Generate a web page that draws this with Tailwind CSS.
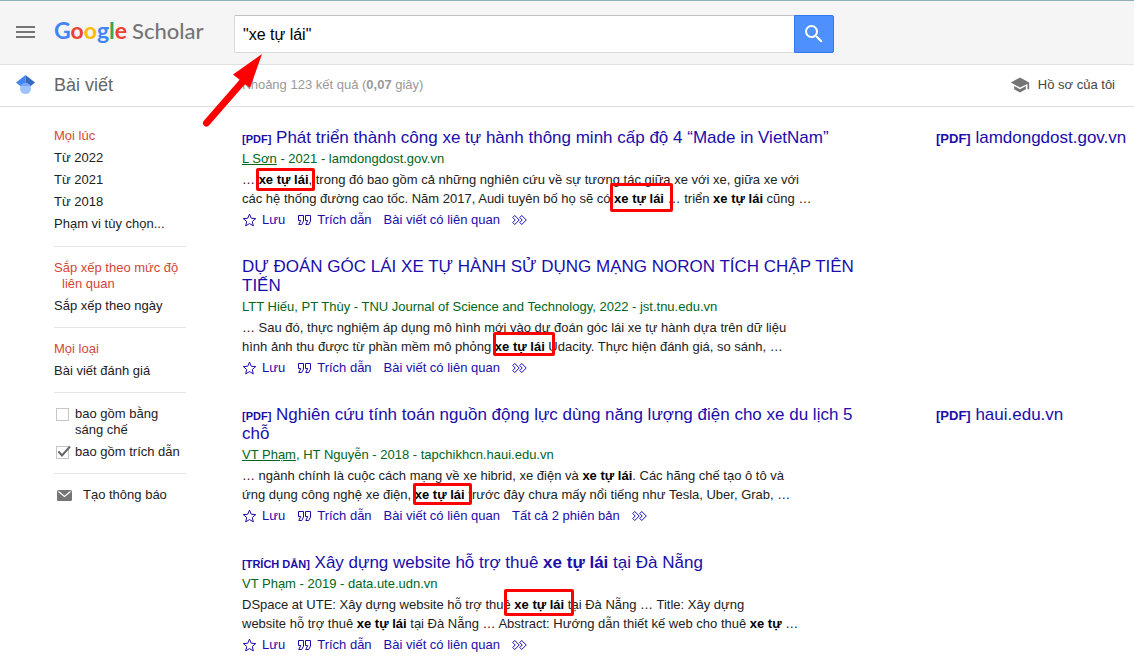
<!DOCTYPE html>
<html lang="vi">
  <head>
    <meta charset="UTF-8" />
    <meta name="viewport" content="width=device-width, initial-scale=1.0" />
    <title>"xe tự lái" - Google Scholar</title>
    <script src="https://cdn.jsdelivr.net/npm/@tailwindcss/browser@4"></script>
  </head>
  <body class="relative overflow-x-hidden bg-white font-['Liberation_Sans',Arial,sans-serif] text-[13px] leading-4 text-[#222]">
    <!-- icons shared by the result rows -->
    <svg class="hidden">
      <symbol id="star" viewBox="0 0 15 16"><path d="M7.5 11.57l3.824 2.308-1.015-4.35 3.379-2.926-4.45-.378L7.5 2.122 5.761 6.224l-4.449.378 3.379 2.926-1.015 4.35z" /></symbol>
      <symbol id="cite" viewBox="0 0 15 16"><path d="M6.5 3.5H1.5V8.5H3.75L1.75 12.5H4.75L6.5 9V3.5zM13.5 3.5H8.5V8.5H10.75L8.75 12.5H11.75L13.5 9V3.5z" /></symbol>
      <symbol id="more" viewBox="0 0 15 16"><path d="M.75 5.5l2-2L7.25 8l-4.5 4.5-2-2L3.25 8zM7.75 5.5l2-2L14.25 8l-4.5 4.5-2-2L10.25 8z" /></symbol>
    </svg>

    <header class="flex h-[65px] items-center border-t border-b border-t-[#8fb0b5] border-b-[#e0e0e0] bg-[#f5f5f5] pb-[2px]">
      <button class="flex w-[54px] pl-4" aria-label="Menu">
        <svg class="h-3 w-[19px] fill-[#757575]" viewBox="0 0 19 12"><path d="M0 0h19v2H0zM0 5h19v2H0zM0 10h19v2H0z" /></svg>
      </button>
      <a href="#" class="flex w-[180px] items-baseline gap-[5px] pb-[2px] font-[Lato,sans-serif] text-[22px] leading-7 font-medium text-[#757575]" aria-label="Google Scholar">
        <span class="text-[23px] font-bold"><span class="text-[#4285f4]">G</span><span class="text-[#ea4335]">o</span><span class="text-[#fbbc05]">o</span><span class="text-[#4285f4]">g</span><span class="text-[#34a853]">l</span><span class="text-[#ea4335]">e</span></span>
        <span>Scholar</span>
      </a>
      <form class="mt-1 flex h-[38px] w-[600px]">
        <input type="text" value='"xe tự lái"' aria-label="Tìm kiếm" class="min-w-0 flex-1 rounded-l-xs border border-r-0 border-[#d9d9d9] border-t-[#c0c0c0] bg-white px-2 pt-[2px] text-base text-black" />
        <button type="button" aria-label="Tìm kiếm" class="flex w-10 items-center justify-center rounded-r-xs border border-[#3079ed] bg-[#4d90fe]">
          <svg class="size-6 fill-white" viewBox="0 0 24 24"><path d="M15.500 14h-.79l-.28-.27A6.471 6.471 0 0 0 16 9.500 6.500 6.500 0 1 0 9.500 16c1.610 0 3.090-.59 4.230-1.570l.27.28v.79l5 4.990L20.490 19l-4.990-5zm-6 0C7.010 14 5 11.990 5 9.500S7.010 5 9.500 5 14 7.010 14 9.500 11.990 14 9.500 14z" /></svg>
        </button>
      </form>
    </header>

    <div class="flex h-[42px] items-center border-b border-[#e0e0e0] pb-[2px]">
      <div class="w-[54px] pl-4">
        <svg class="size-[19px]" viewBox="0 0 512 512">
          <path fill="#4285f4" d="M256 411.120L0 202.667 256 0z" />
          <path fill="#356ac3" d="M256 411.120l256-208.453L256 0z" />
          <circle fill="#a0c3ff" cx="256" cy="362.667" r="149.333" />
          <path fill="#76a7fa" d="M121.037 298.667c23.968-50.453 75.392-85.334 134.963-85.334s110.995 34.881 134.963 85.334H121.037z" />
        </svg>
      </div>
      <h1 class="w-[188px] text-lg leading-6 text-[#666]">Bài viết</h1>
      <p class="flex-1 text-[#999]">Khoảng 123 kết quả (<b>0,07</b> giây)</p>
      <a href="#" class="flex items-center gap-2 pr-[19px] text-[#444]">
        <svg class="size-5 fill-[#757575]" viewBox="0 0 24 24"><path d="M5 13.180v4L12 21l7-3.820v-4L12 17l-7-3.820zM12 3L1 9l11 6 9-4.090V17h2V9L12 3z" /></svg>
        Hồ sơ của tôi
      </a>
    </div>

    <div class="flex">
      <aside class="w-[242px] shrink-0 pt-[18px] pl-[54px]">
        <div class="w-[132px]">
          <ul class="border-b border-[#e5e5e5] pb-[11px]">
            <li class="py-[3px]"><a href="#" class="text-[#d14836]">Mọi lúc</a></li>
            <li class="py-[3px]"><a href="#">Từ 2022</a></li>
            <li class="py-[3px]"><a href="#">Từ 2021</a></li>
            <li class="py-[3px]"><a href="#">Từ 2018</a></li>
            <li class="py-[3px]"><a href="#">Phạm vi tùy chọn...</a></li>
          </ul>
          <ul class="border-b border-[#e5e5e5] py-[10px]">
            <li class="py-[3px] pl-2 -indent-2"><a href="#" class="text-[#d14836]">Sắp xếp theo mức độ liên quan</a></li>
            <li class="py-[3px]"><a href="#">Sắp xếp theo ngày</a></li>
          </ul>
          <ul class="border-b border-[#e5e5e5] py-[10px]">
            <li class="py-[3px]"><a href="#" class="text-[#d14836]">Mọi loại</a></li>
            <li class="py-[3px]"><a href="#">Bài viết đánh giá</a></li>
          </ul>
          <div class="border-b border-[#e5e5e5] py-[10px]">
            <label class="flex gap-[6px] py-[3px] pl-[2px]">
              <input type="checkbox" class="mt-[2px] size-[13px] shrink-0 appearance-none border border-[#c6c6c6] bg-white" />
              <span class="w-[100px]">bao gồm bằng sáng chế</span>
            </label>
            <label class="relative flex gap-[6px] py-[3px] pl-[2px] whitespace-nowrap">
              <input type="checkbox" checked class="mt-[2px] size-[13px] shrink-0 appearance-none border border-[#c6c6c6] bg-white" />
              <svg class="absolute top-1 left-[3px] h-3 w-[14px] fill-none stroke-[#666] stroke-2" viewBox="0 0 14 12"><path d="M1.500 6.500l3.500 4L13 1.500" /></svg>
              bao gồm trích dẫn
            </label>
          </div>
          <a href="#" class="mt-[10px] flex items-center gap-[11px] py-[3px] pl-[3px]">
            <svg class="h-[11px] w-[15px]" viewBox="0 0 15 11"><rect width="15" height="11" rx="1.500" fill="#757575" /><path d="M1.500 1.500l6 5 6-5" fill="none" stroke="#fff" stroke-width="1.200" /></svg>
            Tạo thông báo
          </a>
        </div>
      </aside>

      <main class="flex min-w-0 flex-1 flex-col gap-7 pt-[21px]">
        <article class="flex">
          <div class="w-[694px] shrink-0">
            <h3 class="mb-[3px] w-[624px] text-[17px] leading-[19px] text-[#1a0dab]"><b class="text-[11px] leading-none">[PDF]</b> <a href="#">Phát triển thành công xe tự hành thông minh cấp độ 4 “Made in VietNam”</a></h3>
            <p class="leading-[18px] text-[#006621]"><a href="#" class="underline">L Sơn</a> - 2021 - lamdongdost.gov.vn</p>
            <p class="mt-[2px] leading-[19px]">… <b class="text-black">xe tự lái</b>, trong đó bao gồm cả những nghiên cứu về sự tương tác giữa xe với xe, giữa xe với<br />các hệ thống đường cao tốc. Năm 2017, Audi tuyên bố họ sẽ có <b class="text-black">xe tự lái</b> … triển <b class="text-black">xe tự lái</b> cũng …</p>
            <div class="mt-[3px] flex gap-3 leading-[18px] text-[#1a0dab]">
              <a href="#" class="flex items-center gap-[5px]"><svg class="h-4 w-[15px] fill-none stroke-current"><use href="#star" /></svg>Lưu</a>
              <a href="#" class="flex items-center gap-[5px]"><svg class="h-4 w-[15px] fill-none stroke-current"><use href="#cite" /></svg>Trích dẫn</a>
              <a href="#">Bài viết có liên quan</a>
              <a href="#" class="flex items-center" aria-label="Thêm"><svg class="h-4 w-[15px] fill-none stroke-current"><use href="#more" /></svg></a>
            </div>
          </div>
          <a href="#" class="text-[17px] leading-[19px] whitespace-nowrap text-[#1a0dab]"><b class="text-[13px] leading-none">[PDF]</b> lamdongdost.gov.vn</a>
        </article>

        <article class="flex">
          <div class="w-[694px] shrink-0">
            <h3 class="mb-[3px] w-[624px] text-[17px] leading-[19px] text-[#1a0dab]"><a href="#">DỰ ĐOÁN GÓC LÁI XE TỰ HÀNH SỬ DỤNG MẠNG NORON TÍCH CHẬP TIÊN TIẾN</a></h3>
            <p class="leading-[18px] text-[#006621]">LTT Hiếu, PT Thùy - TNU Journal of Science and Technology, 2022 - jst.tnu.edu.vn</p>
            <p class="mt-[2px] leading-[19px]">… Sau đó, thực nghiệm áp dụng mô hình mới vào dự đoán góc lái xe tự hành dựa trên dữ liệu<br />hình ảnh thu được từ phần mềm mô phỏng <b class="text-black">xe tự lái</b> Udacity. Thực hiện đánh giá, so sánh, …</p>
            <div class="mt-[3px] flex gap-3 leading-[18px] text-[#1a0dab]">
              <a href="#" class="flex items-center gap-[5px]"><svg class="h-4 w-[15px] fill-none stroke-current"><use href="#star" /></svg>Lưu</a>
              <a href="#" class="flex items-center gap-[5px]"><svg class="h-4 w-[15px] fill-none stroke-current"><use href="#cite" /></svg>Trích dẫn</a>
              <a href="#">Bài viết có liên quan</a>
              <a href="#" class="flex items-center" aria-label="Thêm"><svg class="h-4 w-[15px] fill-none stroke-current"><use href="#more" /></svg></a>
            </div>
          </div>
        </article>

        <article class="flex">
          <div class="w-[694px] shrink-0">
            <h3 class="mb-[3px] w-[624px] text-[17px] leading-[19px] text-[#1a0dab]"><b class="text-[11px] leading-none">[PDF]</b> <a href="#">Nghiên cứu tính toán nguồn động lực dùng năng lượng điện cho xe du lịch 5 chỗ</a></h3>
            <p class="leading-[18px] text-[#006621]"><a href="#" class="underline">VT Phạm</a>, HT Nguyễn - 2018 - tapchikhcn.haui.edu.vn</p>
            <p class="mt-[2px] leading-[19px]">… ngành chính là cuộc cách mạng về xe hibrid, xe điện và <b class="text-black">xe tự lái</b>. Các hãng chế tạo ô tô và<br />ứng dụng công nghệ xe điện, <b class="text-black">xe tự lái</b> trước đây chưa mấy nổi tiếng như Tesla, Uber, Grab, …</p>
            <div class="mt-[3px] flex gap-3 leading-[18px] text-[#1a0dab]">
              <a href="#" class="flex items-center gap-[5px]"><svg class="h-4 w-[15px] fill-none stroke-current"><use href="#star" /></svg>Lưu</a>
              <a href="#" class="flex items-center gap-[5px]"><svg class="h-4 w-[15px] fill-none stroke-current"><use href="#cite" /></svg>Trích dẫn</a>
              <a href="#">Bài viết có liên quan</a>
              <a href="#">Tất cả 2 phiên bản</a>
              <a href="#" class="flex items-center" aria-label="Thêm"><svg class="h-4 w-[15px] fill-none stroke-current"><use href="#more" /></svg></a>
            </div>
          </div>
          <a href="#" class="text-[17px] leading-[19px] whitespace-nowrap text-[#1a0dab]"><b class="text-[13px] leading-none">[PDF]</b> haui.edu.vn</a>
        </article>

        <article class="flex">
          <div class="w-[694px] shrink-0">
            <h3 class="mb-[3px] w-[624px] text-[17px] leading-[19px] text-[#1a0dab]"><b class="text-[11px] leading-none">[TRÍCH DẪN]</b> <a href="#">Xây dựng website hỗ trợ thuê <b>xe tự lái</b> tại Đà Nẵng</a></h3>
            <p class="leading-[18px] text-[#006621]">VT Phạm - 2019 - data.ute.udn.vn</p>
            <p class="mt-[2px] leading-[19px]">DSpace at UTE: Xây dựng website hỗ trợ thuê <b class="text-black">xe tự lái</b> tại Đà Nẵng … Title: Xây dựng<br />website hỗ trợ thuê <b class="text-black">xe tự lái</b> tại Đà Nẵng … Abstract: Hướng dẫn thiết kế web cho thuê <b class="text-black">xe tự</b> …</p>
            <div class="mt-[3px] flex gap-3 leading-[18px] text-[#1a0dab]">
              <a href="#" class="flex items-center gap-[5px]"><svg class="h-4 w-[15px] fill-none stroke-current"><use href="#star" /></svg>Lưu</a>
              <a href="#" class="flex items-center gap-[5px]"><svg class="h-4 w-[15px] fill-none stroke-current"><use href="#cite" /></svg>Trích dẫn</a>
              <a href="#">Bài viết có liên quan</a>
              <a href="#" class="flex items-center" aria-label="Thêm"><svg class="h-4 w-[15px] fill-none stroke-current"><use href="#more" /></svg></a>
            </div>
          </div>
        </article>
      </main>
    </div>

    <!-- red marks over the page -->
    <svg class="pointer-events-none absolute top-[50px] left-[200px] h-20 w-[70px]" viewBox="0 0 70 80">
      <path d="M6.500 73L44 30" fill="none" stroke="#f00" stroke-width="7" stroke-linecap="round" />
      <path d="M62 4L33 24.500L50 38z" fill="#f00" />
    </svg>
    <div class="pointer-events-none absolute top-[168px] left-[256px] h-[23px] w-[59px] rounded-xs border-3 border-[#f00]"></div>
    <div class="pointer-events-none absolute top-[183px] left-[610px] h-[29px] w-[63px] rounded-xs border-3 border-[#f00]"></div>
    <div class="pointer-events-none absolute top-[332px] left-[493px] h-6 w-[62px] rounded-xs border-3 border-[#f00]"></div>
    <div class="pointer-events-none absolute top-[483px] left-[413px] h-[22px] w-[59px] rounded-xs border-3 border-[#f00]"></div>
    <div class="pointer-events-none absolute top-[589px] left-[504px] h-[27px] w-[70px] rounded-xs border-3 border-[#f00]"></div>
  </body>
</html>
